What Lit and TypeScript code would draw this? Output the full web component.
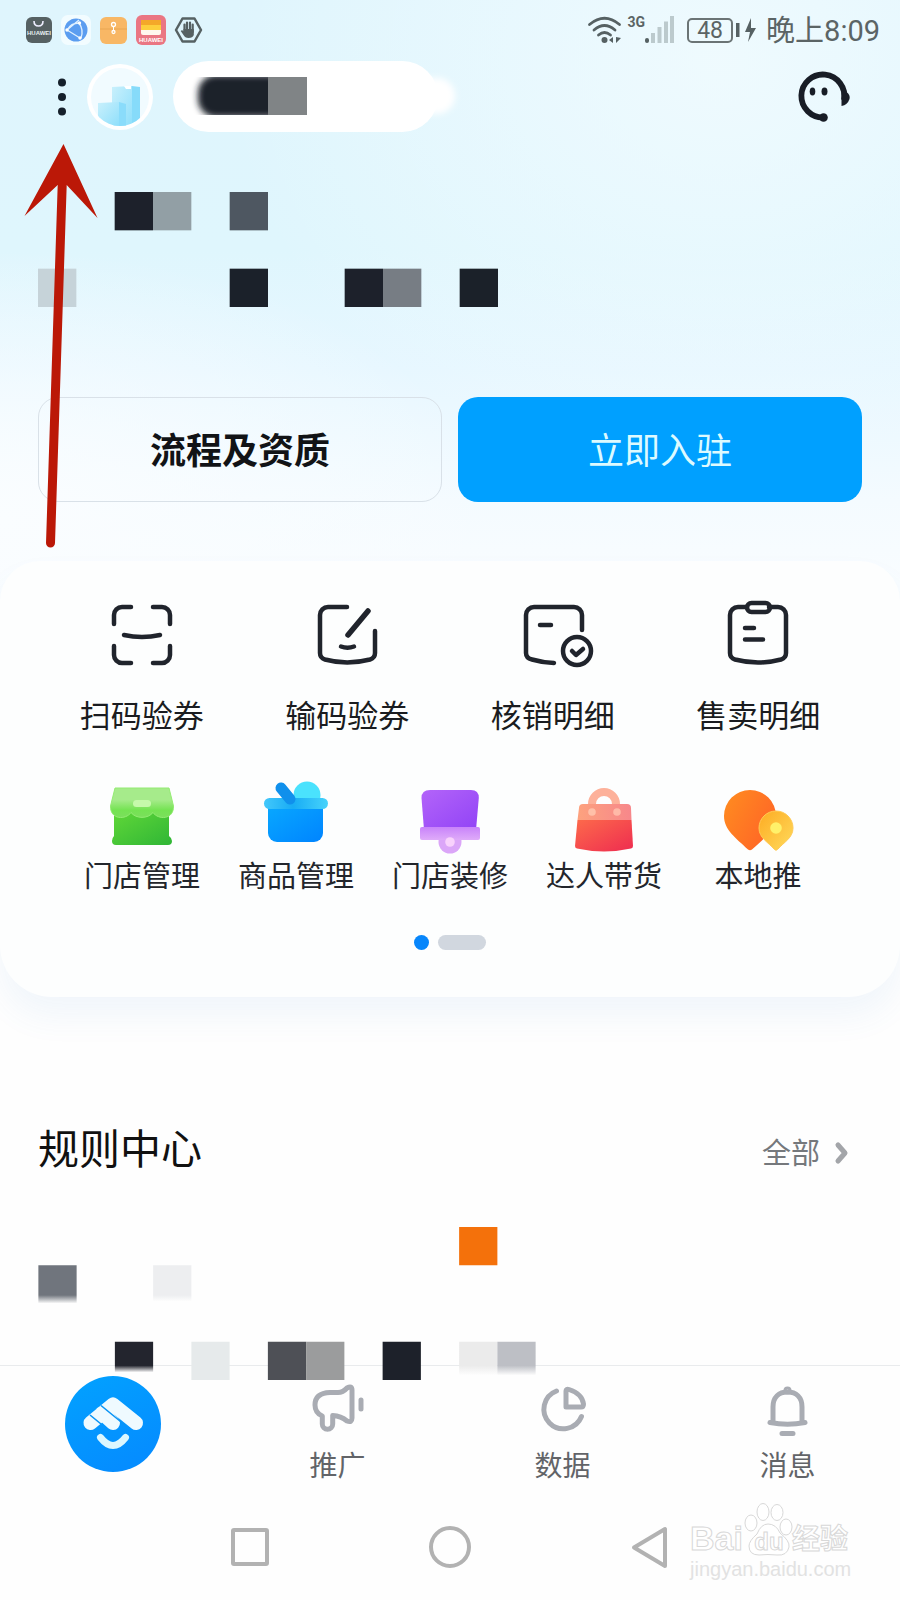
import { LitElement, html, css, svg, nothing, type TemplateResult } from "lit";
import { customElement } from "lit/decorators.js";

interface Entry {
  label: string;
  icon: TemplateResult;
}

interface Cell {
  col: number;
  row: number;
  fill: string;
}

const primaryEntries: Entry[] = [
  {
    label: "扫码验券",
    icon: svg`<path d="M8 25V16a8 8 0 0 1 8-8h9M47 8h9a8 8 0 0 1 8 8v9M64 47v9a8 8 0 0 1-8 8h-9M25 64h-9a8 8 0 0 1-8-8v-9M18 36q18 4 36 0"/>`,
  },
  {
    label: "输码验券",
    icon: svg`<path d="M36 8H17a8 8 0 0 0-8 8v38q0 5 5 6.500q22 6 45 0q5-1.500 5-6.500V32M30 47.500q6.500 2.500 13 0"/><path stroke-width="5.500" d="M57 12L37 36"/>`,
  },
  {
    label: "核销明细",
    icon: svg`<path d="M37 64q-12-.5-22-3.500q-6-1.500-6-6.500V16a8 8 0 0 1 8-8h40a8 8 0 0 1 8 8v15M23 26h11"/><circle cx="60" cy="52" r="14"/><path d="M55 52l4 4 7-6"/>`,
  },
  {
    label: "售卖明细",
    icon: svg`<path d="M25 8h-9a8 8 0 0 0-8 8v38q0 5 5 6.500q23 6 46 0q5-1.500 5-6.500V16a8 8 0 0 0-8-8h-9M23 29h9M23 40.500h18"/><rect x="25" y="4" width="23" height="9" rx="4.500"/>`,
  },
];

const toolEntries: Entry[] = [
  {
    label: "门店管理",
    icon: svg`<defs>
        <linearGradient id="g1" x1="0" y1="0" x2="1" y2="1"><stop offset="0" stop-color="#62d838"/><stop offset="1" stop-color="#2fb636"/></linearGradient>
        <linearGradient id="g2" x1="0" y1="0" x2="0" y2="1"><stop offset="0.400" stop-color="#a6eb8b"/><stop offset="0.750" stop-color="#74e352"/><stop offset="1" stop-color="#7bdf5c"/></linearGradient>
      </defs>
      <path fill="url(#g1)" d="M12 32h55v26q3 2 3 5q0 4-4 4H14q-4 0-4-4q0-3 2-5z"/>
      <path fill="url(#g2)" stroke="#93ec72" d="M13 10H67L71.500 28C72 42 56 42 51 34.500C46 41 34 41 29 34.500C24 42 8 42 8.500 28z"/>
      <rect x="31" y="22" width="18" height="7" rx="3.500" fill="#c6f9ab"/>`,
  },
  {
    label: "商品管理",
    icon: svg`<defs>
        <linearGradient id="b1" x1="0" y1="0" x2="1" y2="1"><stop offset="0" stop-color="#08a8ff"/><stop offset="1" stop-color="#0084ff"/></linearGradient>
        <linearGradient id="b2" x1="0" y1="0" x2="1" y2="0"><stop offset="0" stop-color="#43c8fb"/><stop offset="0.450" stop-color="#18acf4"/><stop offset="1" stop-color="#47d3fb"/></linearGradient>
      </defs>
      <circle cx="51" cy="17" r="13.500" fill="#4ae2fd"/>
      <path fill="url(#b1)" d="M12 28h55v27a9 9 0 0 1-9 9H21a9 9 0 0 1-9-9z"/>
      <rect x="8" y="20" width="64" height="11" rx="5.500" fill="url(#b2)"/>
      <path d="M25 10l9 11" stroke="#1090ec" stroke-width="11" stroke-linecap="round"/>`,
  },
  {
    label: "门店装修",
    icon: svg`<defs>
        <linearGradient id="p1" x1="0" y1="0" x2="1" y2="1"><stop offset="0" stop-color="#b364f9"/><stop offset="1" stop-color="#9143f6"/></linearGradient>
        <linearGradient id="p2" x1="0" y1="0" x2="0" y2="1"><stop offset="0" stop-color="#c883fa"/><stop offset="1" stop-color="#dfabf9"/></linearGradient>
      </defs>
      <path fill="url(#p1)" d="M20 12h41q8 0 7.800 8L66 52H14L11.500 20Q11.500 12 20 12z"/>
      <circle cx="40" cy="64" r="11.500" fill="#dba6f8"/>
      <rect x="10" y="49" width="60" height="13" rx="2" fill="url(#p2)"/>
      <circle cx="40" cy="64" r="4.800" fill="#f8d2fc"/>`,
  },
  {
    label: "达人带货",
    icon: svg`<defs>
        <linearGradient id="r1" x1="0" y1="0" x2="1" y2="1"><stop offset="0" stop-color="#fd6a4b"/><stop offset="1" stop-color="#ee2c50"/></linearGradient>
        <linearGradient id="r2" x1="0" y1="0" x2="1" y2="0"><stop offset="0" stop-color="#fda27e"/><stop offset="1" stop-color="#f7878b"/></linearGradient>
      </defs>
      <path d="M28 28v-2a12 12 0 0 1 24 0v2" fill="none" stroke="#fdb19a" stroke-width="8"/>
      <path fill="url(#r1)" d="M13.500 42H67.500L69 68q0 2-2 2.500q-27 6-54 0q-2-.5-2-2.500z"/>
      <path fill="url(#r2)" d="M19 26H63q4 0 4 4L67.500 42H13.500L15 30q0-4 4-4z"/>
      <circle cx="28" cy="34" r="3.800" fill="#ffc0a8"/><circle cx="53" cy="34" r="3.800" fill="#ffb9a8"/>`,
  },
  {
    label: "本地推",
    icon: svg`<defs>
        <linearGradient id="o1" x1="0" y1="0" x2="1" y2="0.600"><stop offset="0" stop-color="#ff8d20"/><stop offset="1" stop-color="#ff6626"/></linearGradient>
        <linearGradient id="o2" x1="0" y1="0" x2="1" y2="1"><stop offset="0" stop-color="#fdab22"/><stop offset="1" stop-color="#ffdb5c"/></linearGradient>
      </defs>
      <path fill="url(#o1)" d="M32 12a26 26 0 0 1 26 26C58 52 46 60 34 71.500q-2 1.500-4 0C18 60 6 52 6 38A26 26 0 0 1 32 12z"/>
      <path fill="url(#o2)" stroke="#ffca55" d="M58 33a17 17 0 0 1 17 17C75 60 66 64 59.500 71.500q-1.500 1.500-3 0C50 64 41 60 41 50A17 17 0 0 1 58 33z"/>
      <circle cx="58" cy="50" r="5.800" fill="#fff16a"/>`,
  },
];

const tabs: Entry[] = [
  {
    label: "推广",
    icon: svg`<path d="M20 12.500h8q5 0 9-4.500q5-3 5 2v28q0 5-5 3q-6-5-14.300-5.500V44a5.200 5.200 0 0 1-10.400 0V36Q5 33 5 25Q5 13 20 12.500zM51 20v9"/>`,
  },
  {
    label: "数据",
    icon: svg`<path d="M21.500 11A19.500 19.500 0 1 0 46.500 36.500M31 11Q31 8.500 34 9.500C42 12 47.500 17 48.500 24Q48.500 27 46 27H31z"/>`,
  },
  {
    label: "消息",
    icon: svg`<path d="M13 42V27C13 17 19 12 27.500 12S42 17 42 27V42M10 42.500q17.500 3.500 35 0M22 53.500h11"/><circle cx="27.500" cy="10.500" r="1.500"/>`,
  },
];

const heroCells: Cell[] = [
  { col: 2, row: 0, fill: "#1d212b" },
  { col: 3, row: 0, fill: "#929fa5" },
  { col: 5, row: 0, fill: "#4e5761" },
  { col: 0, row: 2, fill: "#c6d3d9" },
  { col: 5, row: 2, fill: "#1b212a" },
  { col: 8, row: 2, fill: "#1d212b" },
  { col: 9, row: 2, fill: "#777d84" },
  { col: 11, row: 2, fill: "#1b2129" },
];

const ruleCells: Cell[] = [
  { col: 11, row: 0, fill: "#f4710b" },
  { col: 0, row: 1, fill: "url(#fadeSlate)" },
  { col: 3, row: 1, fill: "url(#fadePale)" },
  { col: 2, row: 3, fill: "url(#fadeInk)" },
  { col: 4, row: 3, fill: "#e6eaeb" },
  { col: 6, row: 3, fill: "#4e5056" },
  { col: 7, row: 3, fill: "#9b9c9d" },
  { col: 9, row: 3, fill: "#1d212a" },
  { col: 11, row: 3, fill: "url(#fadeLight)" },
  { col: 12, row: 3, fill: "url(#fadeMist)" },
];

const fade = (id: string, color: string, from: number, to: number) => svg`
  <linearGradient id=${id} x1="0" y1="0" x2="0" y2="1">
    <stop offset=${from} stop-color=${color}></stop>
    <stop offset=${to} stop-color=${color} stop-opacity="0"></stop>
  </linearGradient>`;

// Grid of solid blocks that hides private text.
const mosaic = (cells: Cell[], cols: number, rows: number, defs: unknown = nothing) => html`
  <svg class="mosaic" viewBox="0 0 ${cols} ${rows}" width=${Math.round((cols * 115) / 3)} height=${Math.round((rows * 115) / 3)} aria-hidden="true">
    <defs>${defs}</defs>
    ${cells.map((c) => svg`<rect x=${c.col} y=${c.row} width="1" height="1" fill=${c.fill}></rect>`)}
  </svg>`;

@customElement("status-bar")
class StatusBar extends LitElement {
  static styles = css`
    :host {
      display: flex;
      align-items: center;
      justify-content: space-between;
      height: 60px;
      padding: 0 20px 0 24px;
      font-family: Roboto, "Noto Sans CJK SC", sans-serif;
      color: #5b6465;
    }
    .group { display: flex; align-items: center; }
    .apps { gap: 7px; }
    svg { display: block; overflow: visible; }
    .tiny { font: 700 6px "Liberation Sans", sans-serif; }
    .net { font-size: 14px; line-height: 18px; font-weight: 700; align-self: flex-start; margin: 4px 0 0 6px; }
    .battery {
      box-sizing: border-box;
      width: 46px;
      height: 25px;
      margin-left: 12px;
      border: 2px solid #6b7475;
      border-radius: 5px;
      font-size: 23px;
      line-height: 22px;
      text-align: center;
    }
    .time { margin-left: 9px; font-size: 29px; line-height: 40px; padding-top: 2px; }
  `;

  render() {
    return html`
      <div class="group apps">
        <svg width="30" height="30" viewBox="0 0 30 30" aria-hidden="true">
          <rect x="2" y="2" width="26" height="26" rx="6" fill="#566163" />
          <path d="M10 6q0 5 4.500 5t4.500-5" fill="none" stroke="#eef" stroke-width="1.600" />
          <text class="tiny" x="15" y="20" text-anchor="middle" fill="#e6f0f2">HUAWEI</text>
        </svg>
        <svg width="30" height="30" viewBox="0 0 30 30" aria-hidden="true">
          <rect width="30" height="30" rx="7" fill="#f2fcff" />
          <circle cx="15" cy="15" r="11.500" fill="#5b9df0" />
          <path d="M18 5L6 15L19 23M18 8q5 7 2 15M18 8q-8 0-12 7" fill="none" stroke="#dff0ff" stroke-width="1.300" />
          <circle cx="18.500" cy="8" r="1.700" fill="#fff" /><circle cx="6" cy="15" r="1.700" fill="#fff" /><circle cx="19" cy="23" r="1.700" fill="#fff" />
        </svg>
        <svg width="30" height="30" viewBox="0 0 30 30" aria-hidden="true">
          <rect x="2" y="2" width="27" height="27" rx="6" fill="#f8b765" />
          <path d="M2 14h27" stroke="#e9a652" />
          <circle cx="15.500" cy="9.500" r="2" fill="none" stroke="#fff" stroke-width="1.300" /><circle cx="15.500" cy="17" r="1.500" fill="none" stroke="#fff" stroke-width="1.300" /><path d="M15.500 12v3" stroke="#fff" />
        </svg>
        <svg width="30" height="30" viewBox="0 0 30 30" aria-hidden="true">
          <rect x="1" width="30" height="30" rx="6" fill="#ea7683" />
          <rect x="6" y="5" width="20" height="15" rx="2" fill="#fff7ee" />
          <path d="M6 5h20v5H6z" fill="#f4a829" /><path d="M6 10h20v5H6z" fill="#fdcf3c" />
          <text class="tiny" x="16" y="27" text-anchor="middle" fill="#fff">HUAWEI</text>
        </svg>
        <svg width="32" height="30" viewBox="0 0 30 30" aria-hidden="true">
          <path d="M9.500 3.500h12l6.500 11.500-6.500 11.500h-12L3 15z" fill="none" stroke="#566163" stroke-width="2.500" stroke-linejoin="round" />
          <path d="M11.500 17V9.500M14 16V7.500M17 16V7.500M19.700 17V9.500" stroke="#566163" stroke-width="2.200" stroke-linecap="round" />
          <path d="M10.500 14h10.300v6q-1 3-5.300 3q-3.500 0-5-3l-2.800-4q1.500-1.500 2.800.5z" fill="#566163" />
        </svg>
      </div>
      <div class="group">
        <svg width="34" height="28" viewBox="0 0 34 28" aria-hidden="true">
          <path d="M1.500 8.500q15-12.500 30 0M6 14q10.500-9 21 0M10.500 19q6-5 12 0" fill="none" stroke="#566163" stroke-width="2.800" stroke-linecap="round" />
          <circle cx="16.500" cy="24" r="3" fill="#566163" />
          <path d="M25 21v6l-4-3zM28 21v6l5-5z" fill="#566163" />
        </svg>
        <p class="net">3G</p>
        <svg width="30" height="28" viewBox="0 0 30 28" aria-hidden="true">
          <rect x="0" y="22" width="4" height="5" rx="2" fill="#566163" />
          <path d="M6 17h4v10H6zM12.500 11h4v16h-4zM19 5.500h4V27h-4zM25 0h4v27h-4z" fill="#bccacd" />
        </svg>
        <div class="battery">48</div>
        <svg width="24" height="26" viewBox="0 0 24 26" aria-hidden="true">
          <rect x="3" y="6" width="3.500" height="14" fill="#566163" />
          <path d="M18 1l-6 14h5l-2 10 8-14h-5z" fill="#566163" />
        </svg>
        <time class="time">晚上8:09</time>
      </div>
    `;
  }
}

@customElement("app-root")
class AppRoot extends LitElement {
  static styles = css`
    :host {
      display: block;
      position: relative;
      background: #fefefe;
      color: #1a1c20;
      font-family: "Noto Sans CJK SC", sans-serif;
      overflow: hidden;
    }
    svg { display: block; overflow: visible; }
    a { color: inherit; text-decoration: none; }
    button { font-family: inherit; color: inherit; border: 0; padding: 0; background: none; cursor: pointer; }
    h2 { margin: 0; font-weight: 400; }

    .top {
      background:
        radial-gradient(ellipse 55% 270px at 0 520px, #fafdff, rgba(250, 253, 255, 0)),
        radial-gradient(ellipse 55% 420px at 80% 60px, rgba(244, 252, 255, 0.75), rgba(244, 252, 255, 0)),
        linear-gradient(#dff5fd 0, #dff6fd 250px, #e7f7ff 370px, #f4fbff 500px, #fafdff 600px, #fefefe 720px);
    }

    .header {
      display: flex;
      align-items: center;
      padding: 1px 50px 0 44px;
    }
    .avatar { margin: 0 20px 0 7px; }
    .store {
      width: 265px;
      height: 71px;
      border-radius: 36px;
      background: #fff;
    }
    .service { margin-left: auto; }

    .intro { padding: 60px 38px 0; }
    .actions {
      display: grid;
      grid-template-columns: 1fr 1fr;
      gap: 16px;
      padding: 90px 38px 59px;
    }
    .action {
      height: 105px;
      padding-bottom: 4px;
      border-radius: 20px;
      font-size: 36px;
      line-height: 48px;
    }
    .outline { border: 1px solid #d9e1e8; font-weight: 700; color: #111316; }
    .solid { background: #00a0ff; color: #ddfaff; font-weight: 400; }

    .card {
      padding: 38px 0 47px;
      border-radius: 40px 40px 52px 52px;
      background: #fdfefe;
      box-shadow: 0 20px 32px rgba(70, 140, 210, 0.07);
    }
    .row { display: grid; }
    .four { grid-template-columns: repeat(4, 1fr); padding: 0 39px; }
    .five { grid-template-columns: repeat(5, 1fr); padding: 0 65px; margin-top: 42px; }
    .entry { display: flex; flex-direction: column; align-items: center; white-space: nowrap; }
    .primary { gap: 21px; font-size: 31px; line-height: 44px; }
    .line { fill: none; stroke: #20242c; stroke-width: 4.5; stroke-linecap: round; stroke-linejoin: round; }
    .tool { font-size: 29px; line-height: 32px; color: #23262c; }
    .pager { display: flex; justify-content: center; gap: 9px; margin-top: 45px; }
    .dot { width: 15px; height: 15px; border-radius: 8px; background: #0786fb; }
    .dash { width: 48px; background: #d1d7df; }

    .rules { padding: 119px 38px 0; }
    .head { display: flex; justify-content: space-between; align-items: baseline; }
    .title { font-size: 41px; line-height: 60px; color: #111; }
    .more { display: flex; align-items: center; gap: 15px; margin-right: 13px; font-size: 29px; line-height: 40px; color: #75787c; }
    .rules .mosaic { position: relative; z-index: 1; margin-top: 51px; }

    .tabs {
      display: grid;
      grid-template-columns: repeat(4, 1fr);
      margin-top: -15px;
      padding-top: 10px;
      border-top: 1px solid #e9ebed;
    }
    .tab { display: flex; flex-direction: column; align-items: center; font-size: 28px; line-height: 34px; color: #626468; }
    .glyph { margin: 4px 0 11px; fill: none; stroke: #a9acb3; stroke-width: 5; stroke-linecap: round; stroke-linejoin: round; }

    .system {
      display: grid;
      grid-template-columns: 3fr repeat(3, 4fr) 3fr;
      justify-items: center;
      padding: 44px 0 31px;
    }
    .system button:first-child { grid-column-start: 2; }
    .key { fill: none; stroke: #b2b2b2; stroke-width: 4; stroke-linejoin: round; }

    .arrow { position: absolute; left: 20px; top: 140px; pointer-events: none; }
    .mark { position: absolute; right: 45px; bottom: 16px; pointer-events: none; fill: #fff; stroke: #d8d8d8; }
    .mark-name { font: 700 34px "Liberation Sans", sans-serif; }
    .mark-du { font: 700 24px "Liberation Sans", sans-serif; }
    .mark-cn { font: 700 28px/30px "Noto Sans CJK SC", sans-serif; }
    .mark-url { font: 400 20px "Liberation Sans", sans-serif; fill: #e2e2e2; stroke: none; }
  `;

  render() {
    return html`
      <div class="top">
        <status-bar></status-bar>
        <header class="header">
          <button aria-label="更多">
            <svg width="36" height="48" viewBox="0 0 36 48">
              <g fill="#15202b"><circle cx="18" cy="9.500" r="4" /><circle cx="18" cy="24" r="4" /><circle cx="18" cy="38.500" r="4" /></g>
            </svg>
          </button>
          <svg class="avatar" width="66" height="66" viewBox="0 0 66 66" aria-hidden="true">
            <defs>
              <linearGradient id="tower" x1="0" y1="0" x2="1" y2="1"><stop offset="0" stop-color="#c9f0fc" /><stop offset="1" stop-color="#8fdffb" /></linearGradient>
              <clipPath id="disc"><circle cx="33" cy="33" r="29" /></clipPath>
            </defs>
            <circle cx="33" cy="33" r="33" fill="#fff" />
            <circle cx="33" cy="33" r="29" fill="#f1fbff" />
            <g clip-path="url(#disc)">
              <path d="M25 23l20-1v40H25z" fill="url(#tower)" /><path d="M45 22l8 1v39h-8z" fill="#86dbfa" />
              <path d="M11 39l21-1v24H11z" fill="url(#tower)" /><path d="M32 38l7 2v22h-7z" fill="#8adcfb" />
              <path d="M37 22h7v3h-5z" fill="#fff" />
            </g>
          </svg>
          <div class="store">
            <svg width="290" height="71" viewBox="0 0 290 71" aria-hidden="true">
              <defs>
                <filter id="soft" x="-20%" y="-20%" width="140%" height="140%"><feGaussianBlur stdDeviation="3" /></filter>
                <clipPath id="strip"><path d="M10 16h86v38H10z" /></clipPath>
              </defs>
              <rect x="100" y="17" width="182" height="36" rx="18" fill="#fff" filter="url(#soft)" />
              <g clip-path="url(#strip)"><rect x="25" y="14" width="110" height="42" rx="18" fill="#1d2029" filter="url(#soft)" /></g>
              <path d="M95 16h39v38H95z" fill="#808486" />
            </svg>
          </div>
          <button class="service" aria-label="客服">
            <svg width="52" height="52" viewBox="0 0 52 52">
              <path d="M26 46.500A21.500 21.500 0 1 1 46 29" fill="none" stroke="#181d26" stroke-width="5.800" />
              <path d="M43.500 35V21h5q4 3 3 7q-2 6-8 7z" fill="#181d26" />
              <circle cx="25.500" cy="46.500" r="4.300" fill="#181d26" />
              <ellipse cx="14.500" cy="20.500" rx="2.800" ry="4" fill="#181d26" /><ellipse cx="26.500" cy="20.500" rx="3" ry="4" fill="#181d26" />
            </svg>
          </button>
        </header>

        <section class="intro">${mosaic(heroCells, 12, 3)}</section>
        <div class="actions">
          <button class="action outline">流程及资质</button>
          <button class="action solid">立即入驻</button>
        </div>

        <section class="card">
          <nav class="row four">
            ${primaryEntries.map(
              (e) => html`<a class="entry primary" href="#"><svg class="line" width="72" height="72" viewBox="0 0 72 72" aria-hidden="true">${e.icon}</svg>${e.label}</a>`
            )}
          </nav>
          <nav class="row five">
            ${toolEntries.map(
              (e) => html`<a class="entry tool" href="#"><svg width="80" height="80" viewBox="0 0 80 80" aria-hidden="true">${e.icon}</svg>${e.label}</a>`
            )}
          </nav>
          <div class="pager"><span class="dot"></span><span class="dot dash"></span></div>
        </section>
      </div>

      <section class="rules">
        <div class="head">
          <h2 class="title">规则中心</h2>
          <a class="more" href="#">全部
            <svg width="14" height="22" viewBox="0 0 14 22" aria-hidden="true"><path d="M3 5l7 8-7 8" fill="none" stroke="#a3a5a9" stroke-width="5" stroke-linecap="round" stroke-linejoin="round" /></svg>
          </a>
        </div>
        ${mosaic(ruleCells, 13, 4, [
          fade("fadeSlate", "#70757d", 0.78, 1),
          fade("fadePale", "#edeef0", 0.78, 0.95),
          fade("fadeInk", "#23252e", 0.62, 0.8),
          fade("fadeLight", "#ebebeb", 0.62, 0.88),
          fade("fadeMist", "#bdbfc5", 0.62, 0.88),
        ])}
      </section>

      <nav class="tabs">
        <a class="tab" href="#" aria-label="首页">
          <svg width="96" height="96" viewBox="0 0 96 96">
            <defs>
              <linearGradient id="home" x1="0" y1="0" x2="0.500" y2="1"><stop offset="0" stop-color="#02a2ff" /><stop offset="1" stop-color="#058dff" /></linearGradient>
            </defs>
            <circle cx="48" cy="48" r="48" fill="url(#home)" />
            <path d="M25.500 47L48 28.500L71 47M37 37L48 47" fill="none" stroke="#effaff" stroke-width="14" stroke-linecap="round" stroke-linejoin="round" />
            <path d="M36 29.500L61 50M25 39L36 48" stroke="#0a94f5" stroke-width="1.600" />
            <path d="M35.500 61.500q12.500 16 25 0" fill="none" stroke="#dcf7ff" stroke-width="7" stroke-linecap="round" />
          </svg>
        </a>
        ${tabs.map(
          (t) => html`<a class="tab" href="#"><svg class="glyph" width="56" height="56" viewBox="0 0 56 56" aria-hidden="true">${t.icon}</svg>${t.label}</a>`
        )}
      </nav>

      <div class="system">
        <button aria-label="最近任务"><svg class="key" width="44" height="44" viewBox="0 0 44 44"><rect x="5" y="5" width="34" height="34" rx="1" /></svg></button>
        <button aria-label="主屏幕"><svg class="key" width="44" height="44" viewBox="0 0 44 44"><circle cx="22" cy="22" r="19" /></svg></button>
        <button aria-label="返回"><svg class="key" width="44" height="44" viewBox="0 0 44 44"><path d="M37 4v37L6 22.500z" /></svg></button>
      </div>

      <svg class="arrow" width="80" height="410" viewBox="0 0 80 410" aria-hidden="true">
        <path d="M43.500 4L77.500 78L46.700 45L35 403a4.500 4.500 0 0 1-9 0L37.700 45L4.500 76z" fill="#bb1807" />
      </svg>
      <svg class="mark" width="166" height="82" viewBox="0 0 166 82" aria-hidden="true">
        <text class="mark-name" x="1" y="48">Bai</text>
        <ellipse cx="62" cy="21" rx="6" ry="8" /><ellipse cx="74" cy="10" rx="6" ry="8.500" /><ellipse cx="88" cy="10.500" rx="6" ry="8" /><ellipse cx="97" cy="25" rx="6" ry="8" />
        <path d="M79 22q8 0 12 9q10 8 9 14q-2 9-12 8q-9-1-18 0q-10 0-10-9q0-5 8-12q4-10 11-10z" />
        <text class="mark-du" x="80" y="48" text-anchor="middle">du</text>
        <text class="mark-cn" x="103" y="47">经验</text>
        <text class="mark-url" x="1" y="74">jingyan.baidu.com</text>
      </svg>
    `;
  }
}
